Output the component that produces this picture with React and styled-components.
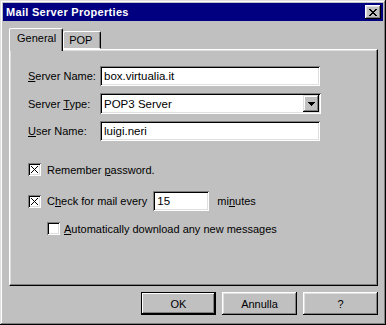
import React from "react";
import styled, { createGlobalStyle } from "styled-components";

const Global = createGlobalStyle`
  html, body { margin: 0; padding: 0; background: #c0c0c0; }
  body { font-family: "Liberation Sans", Arial, sans-serif; font-size: 11px; color: #000; }
  * { box-sizing: border-box; }
`;

const Window = styled.div`
  width: 386px;
  height: 325px;
  background: #c0c0c0;
  padding: 3px;
  display: flex;
  flex-direction: column;
  box-shadow: inset -1px -1px #000, inset 1px 1px #dfdfdf, inset -2px -2px #808080, inset 2px 2px #fff;
`;

const TitleBar = styled.div`
  height: 18px;
  background: #000080;
  display: flex;
  align-items: center;
  justify-content: space-between;
  padding: 0 2px 0 3px;
`;

const TitleText = styled.span`
  color: #fff;
  font-weight: bold;
  font-size: 11px;
  letter-spacing: 0.3px;
`;

const CloseBtn = styled.div`
  width: 16px;
  height: 14px;
  background: #c0c0c0;
  display: flex;
  align-items: center;
  justify-content: center;
  box-shadow: inset -1px -1px #000, inset 1px 1px #fff, inset -2px -2px #808080, inset 2px 2px #dfdfdf;
`;

const Body = styled.div`
  flex: 1;
  display: flex;
  flex-direction: column;
  padding: 7px 5px 7px 6px;
`;

const TabStrip = styled.div`
  display: flex;
  align-items: flex-end;
  height: 21px;
`;

const Tab = styled.div`
  position: relative;
  z-index: ${(p) => (p.$active ? 1 : 0)};
  height: ${(p) => (p.$active ? "23px" : "18px")};
  margin-bottom: ${(p) => (p.$active ? "-2px" : "0")};
  padding: ${(p) => (p.$active ? "3px 6px 0 7px" : "2px 8px 0 5px")};
  background: #c0c0c0;
  border-top: 1px solid #fff;
  border-left: 1px solid #fff;
  border-right: 1px solid #000;
  border-radius: 2px 2px 0 0;
  box-shadow: inset -1px 0 #808080;
  ${(p) => (p.$active ? "" : "border-bottom: 1px solid #fff;")}
`;

const Panel = styled.div`
  height: 237px;
  border-top: 1px solid #fff;
  border-left: 1px solid #fff;
  border-right: 1px solid #000;
  border-bottom: 1px solid #000;
  box-shadow: inset -1px -1px #808080, inset 1px 1px #dfdfdf;
  padding: 16px 0 0 18px;
  display: flex;
  flex-direction: column;
`;

const Form = styled.div`
  display: grid;
  grid-template-columns: 72px auto;
  grid-auto-rows: auto;
  row-gap: 7px;
  align-items: center;
  justify-items: start;
`;

const Label = styled.span`
  white-space: nowrap;
`;

const U = styled.span`
  text-decoration: underline;
  text-underline-offset: 1px;
`;

const Field = styled.div`
  width: ${(p) => p.$w || 220}px;
  height: ${(p) => p.$h || 20}px;
  background: #fff;
  padding: 0 4px;
  display: flex;
  align-items: center;
  justify-content: space-between;
  box-shadow: inset 1px 1px #808080, inset -1px -1px #fff, inset 2px 2px #000, inset -2px -2px #dfdfdf;
  font-size: 11.5px;
  white-space: nowrap;
`;

const DropBtn = styled.div`
  width: 16px;
  height: 17px;
  margin-right: -2px;
  background: #c0c0c0;
  display: flex;
  align-items: center;
  justify-content: center;
  box-shadow: inset -1px -1px #000, inset 1px 1px #dfdfdf, inset -2px -2px #808080, inset 2px 2px #fff;
`;

const CheckRow = styled.div`
  display: flex;
  align-items: center;
  gap: ${(p) => p.$gap || 6}px;
  margin-top: ${(p) => p.$mt || 0}px;
  margin-left: ${(p) => p.$ml || 0}px;
  white-space: nowrap;
`;

const Box = styled.div`
  width: 13px;
  height: 13px;
  flex: none;
  background: #fff;
  display: flex;
  align-items: center;
  justify-content: center;
  box-shadow: inset 1px 1px #808080, inset -1px -1px #fff, inset 2px 2px #000, inset -2px -2px #dfdfdf;
`;

const Buttons = styled.div`
  display: flex;
  justify-content: flex-end;
  gap: 6px;
  margin-top: 6px;
`;

const Button = styled.div`
  width: 75px;
  height: 23px;
  display: flex;
  align-items: center;
  justify-content: center;
  background: #c0c0c0;
  box-shadow: ${(p) =>
    p.$default
      ? "inset 0 0 0 1px #000, inset -2px -2px #000, inset 2px 2px #fff, inset -3px -3px #808080"
      : "inset -1px -1px #000, inset 1px 1px #fff, inset -2px -2px #808080, inset 2px 2px #dfdfdf"};
  font-size: 11px;
`;

function CheckBox({ checked }) {
  return (
    <Box>
      {checked && (
        <svg width="9" height="9" viewBox="0 0 9 9" shapeRendering="crispEdges">
          <path d="M1 1h1v1H1zM2 2h1v1H2zM3 3h1v1H3zM4 4h1v1H4zM5 5h1v1H5zM6 6h1v1H6zM7 7h1v1H7zM7 1h1v1H7zM6 2h1v1H6zM5 3h1v1H5zM3 5h1v1H3zM2 6h1v1H2zM1 7h1v1H1z" fill="#000" />
        </svg>
      )}
    </Box>
  );
}

export default function App() {
  return (
    <>
      <Global />
      <Window>
        <TitleBar>
          <TitleText>Mail Server Properties</TitleText>
          <CloseBtn>
            <svg width="8" height="7" viewBox="0 0 8 7" shapeRendering="crispEdges">
              <path d="M0 0h2v1H0zM6 0h2v1H6zM1 1h2v1H1zM5 1h2v1H5zM2 2h4v1H2zM3 3h2v1H3zM2 4h4v1H2zM1 5h2v1H1zM5 5h2v1H5zM0 6h2v1H0zM6 6h2v1H6z" fill="#000" />
            </svg>
          </CloseBtn>
        </TitleBar>
        <Body>
          <TabStrip>
            <Tab $active>General</Tab>
            <Tab>POP</Tab>
          </TabStrip>
          <Panel>
            <Form>
              <Label><U>S</U>erver Name:</Label>
              <Field>box.virtualia.it</Field>
              <Label>Server <U>T</U>ype:</Label>
              <Field $w={221} $h={21}>
                <span>POP3 Server</span>
                <DropBtn>
                  <svg width="7" height="4" viewBox="0 0 7 4" shapeRendering="crispEdges">
                    <path d="M0 0h7v1H0zM1 1h5v1H1zM2 2h3v1H2zM3 3h1v1H3z" fill="#000" />
                  </svg>
                </DropBtn>
              </Field>
              <Label><U>U</U>ser Name:</Label>
              <Field>luigi.neri</Field>
            </Form>
            <CheckRow $mt={22}>
              <CheckBox checked />
              <Label>Remember <U>p</U>assword.</Label>
            </CheckRow>
            <CheckRow $mt={15}>
              <CheckBox checked />
              <Label>C<U>h</U>eck for mail every</Label>
              <Field $w={56}>15</Field>
              <Label style={{ marginLeft: 2 }}>mi<U>n</U>utes</Label>
            </CheckRow>
            <CheckRow $mt={11} $ml={19} $gap={4}>
              <CheckBox />
              <Label><U>A</U>utomatically download any new messages</Label>
            </CheckRow>
          </Panel>
          <Buttons>
            <Button $default>OK</Button>
            <Button>Annulla</Button>
            <Button>?</Button>
          </Buttons>
        </Body>
      </Window>
    </>
  );
}
